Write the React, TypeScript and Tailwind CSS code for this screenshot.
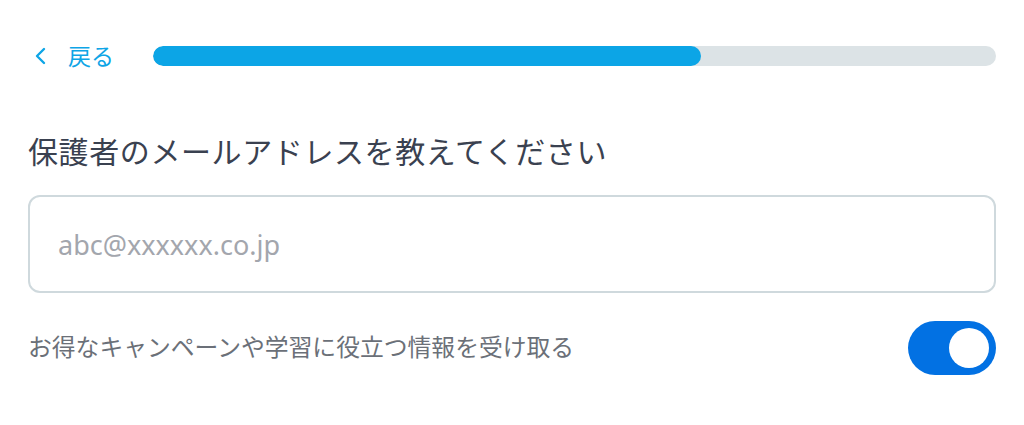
import React, { useState } from 'react'

export default function App() {
  const [email, setEmail] = useState('')
  const [optIn, setOptIn] = useState(true)
  const progress = 65

  return (
    <div
      className="w-[1024px] h-[425px] bg-white px-[28px] pt-[36px]"
      style={{ fontFamily: '"Noto Sans", "Noto Sans CJK JP", sans-serif' }}
    >
      {/* header */}
      <div className="flex items-center h-[40px]">
        <button className="flex items-center text-[#0ea5e6] text-[23px] pl-[6px] shrink-0">
          <svg width="14" height="18" viewBox="0 0 14 18" fill="none" className="mr-[20px]">
            <path d="M10 2 L3 9 L10 16" stroke="#0ea5e6" strokeWidth="2.4" strokeLinecap="round" strokeLinejoin="round" />
          </svg>
          <span className="leading-none">戻る</span>
        </button>
        <div className="ml-[39px] flex-1 h-[20px] rounded-full bg-[#dce3e6] overflow-hidden">
          <div className="h-full rounded-full bg-[#0ca5e6]" style={{ width: `${progress}%` }} />
        </div>
      </div>

      <h1 className="mt-[56px] text-[30px] leading-[40px] text-[#3a4150] tracking-[0.6px]">
        保護者のメールアドレスを教えてください
      </h1>

      <input
        type="email"
        value={email}
        onChange={(e) => setEmail(e.target.value)}
        placeholder="abc@xxxxxx.co.jp"
        className="mt-[23px] w-full h-[98px] rounded-[12px] border-2 border-[#cfd9dd] px-[28px] text-[27px] text-[#3a4150] placeholder:text-[#a3a6ad] outline-none"
      />

      <div className="mt-[28px] flex items-center justify-between">
        <span className="text-[23.8px] text-[#6b7078]">お得なキャンペーンや学習に役立つ情報を受け取る</span>
        <button
          onClick={() => setOptIn(!optIn)}
          className={`w-[88px] h-[54px] rounded-full p-[7px] flex ${optIn ? 'bg-[#0271e3] justify-end' : 'bg-[#d1d5db] justify-start'}`}
        >
          <span className="w-[40px] h-[40px] rounded-full bg-white block" />
        </button>
      </div>
    </div>
  )
}
